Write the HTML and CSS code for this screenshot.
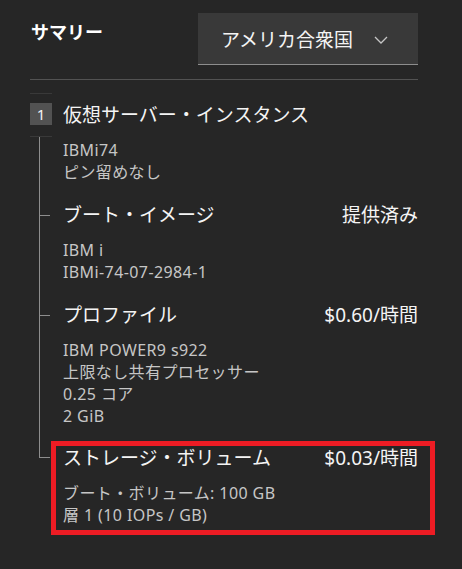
FILE: index.html
```html
<!DOCTYPE html>
<html lang="ja">

<head>
    <meta charset="UTF-8">
    <meta name="viewport" content="width=device-width, initial-scale=1.0">
    <title>サマリー</title>
    <link rel="stylesheet" href="styles.css">
</head>

<body>
    <div class="summary">
        <div class="summary-header">
            <h1 class="summary-title">サマリー</h1>
            <div class="region-select">
                <span>アメリカ合衆国</span>
                <svg class="chevron" width="14" height="8" viewBox="0 0 14 8">
                    <path d="M1 1 L7 7 L13 1" fill="none" stroke="#c6c6c6" stroke-width="1.3" />
                </svg>
            </div>
        </div>
        <div class="divider"></div>

        <div class="stub"></div>
        <div class="step-title">
            <span class="badge">1</span>
            <h2>仮想サーバー・インスタンス</h2>
        </div>
        <div class="stub stub-low"></div>

        <div class="tree">
            <div class="tree-body first">
                IBMi74<br>
                ピン留めなし
            </div>

            <div class="node">
                <div class="node-head">
                    <h3>ブート・イメージ</h3>
                    <span>提供済み</span>
                </div>
                <div class="tree-body">
                    IBM i<br>
                    IBMi-74-07-2984-1
                </div>
            </div>

            <div class="node">
                <div class="node-head">
                    <h3>プロファイル</h3>
                    <span>$0.60/時間</span>
                </div>
                <div class="tree-body">
                    IBM POWER9 s922<br>
                    上限なし共有プロセッサー<br>
                    0.25 コア<br>
                    2 GiB
                </div>
            </div>

            <div class="node last">
                <!-- 赤枠はハイライト用 -->
                <div class="highlight">
                    <div class="node-head">
                        <h3>ストレージ・ボリューム</h3>
                        <span>$0.03/時間</span>
                    </div>
                    <div class="tree-body">
                        ブート・ボリューム: 100 GB<br>
                        層 1 (10 IOPs / GB)
                    </div>
                </div>
            </div>
        </div>
    </div>
</body>

</html>
```

FILE: styles.css
```css
body {
    margin: 0;
    padding: 0;
    background: #262626;
    color: #f4f4f4;
    font-family: "Noto Sans", "Noto Sans CJK JP", sans-serif;
}

.summary {
    padding: 13px 44px 0 30px;
}

.summary-header {
    display: flex;
    justify-content: space-between;
    align-items: flex-start;
}

.summary-title {
    margin: 7px 0 0 1px;
    font-size: 18px;
    line-height: 24px;
    font-weight: 700;
    color: #ffffff;
}

.region-select {
    width: 220px;
    height: 52px;
    box-sizing: border-box;
    background: #393939;
    border-bottom: 1px solid #8d8d8d;
    display: flex;
    align-items: center;
    padding-left: 23px;
    font-size: 19px;
    color: #f4f4f4;
}

.chevron {
    margin-left: 21px;
    margin-top: 2px;
}

.divider {
    margin-top: 14px;
    height: 1px;
    background: #525252;
}

.stub {
    width: 22px;
    height: 1px;
    background: #393939;
    margin-top: 13px;
}

.stub-low {
    margin-top: 9px;
}

.step-title {
    display: flex;
    align-items: flex-start;
    margin-top: 9px;
}

.badge {
    width: 22px;
    height: 22px;
    background: #525252;
    color: #f4f4f4;
    font-size: 15px;
    line-height: 22px;
    text-align: center;
}

.step-title h2,
.node-head h3 {
    margin: 0;
    font-size: 19px;
    line-height: 24px;
    font-weight: 400;
    color: #f4f4f4;
}

.step-title h2 {
    margin-left: 11px;
}

.tree {
    margin-left: 9px;
}

.tree-body {
    margin-top: 12px;
    font-size: 16px;
    line-height: 22px;
    letter-spacing: 0.4px;
    color: #c6c6c6;
}

.tree > .tree-body.first,
.node {
    border-left: 1px solid #8d8d8d;
    padding-left: 23px;
}

.tree > .tree-body.first {
    margin-top: 0;
    padding-top: 2px;
}

.node {
    position: relative;
    padding-top: 20px;
}

.node::before {
    content: "";
    position: absolute;
    left: 0;
    top: 32px;
    width: 10px;
    height: 1px;
    background: #8d8d8d;
}

.node-head {
    display: flex;
    justify-content: space-between;
    align-items: center;
}

.node-head span {
    font-size: 19px;
    line-height: 24px;
    color: #f4f4f4;
}

.node.last {
    border-left: none;
    padding-left: 12px;
    padding-top: 14px;
}

.node.last::before {
    top: 0;
    width: 10px;
    height: 30px;
    background: none;
    border-left: 1px solid #8d8d8d;
    border-bottom: 1px solid #8d8d8d;
}

.highlight {
    border: 5px solid #ed1c24;
    padding: 0 12px 4px 7px;
    margin-right: -17px;
}
```
